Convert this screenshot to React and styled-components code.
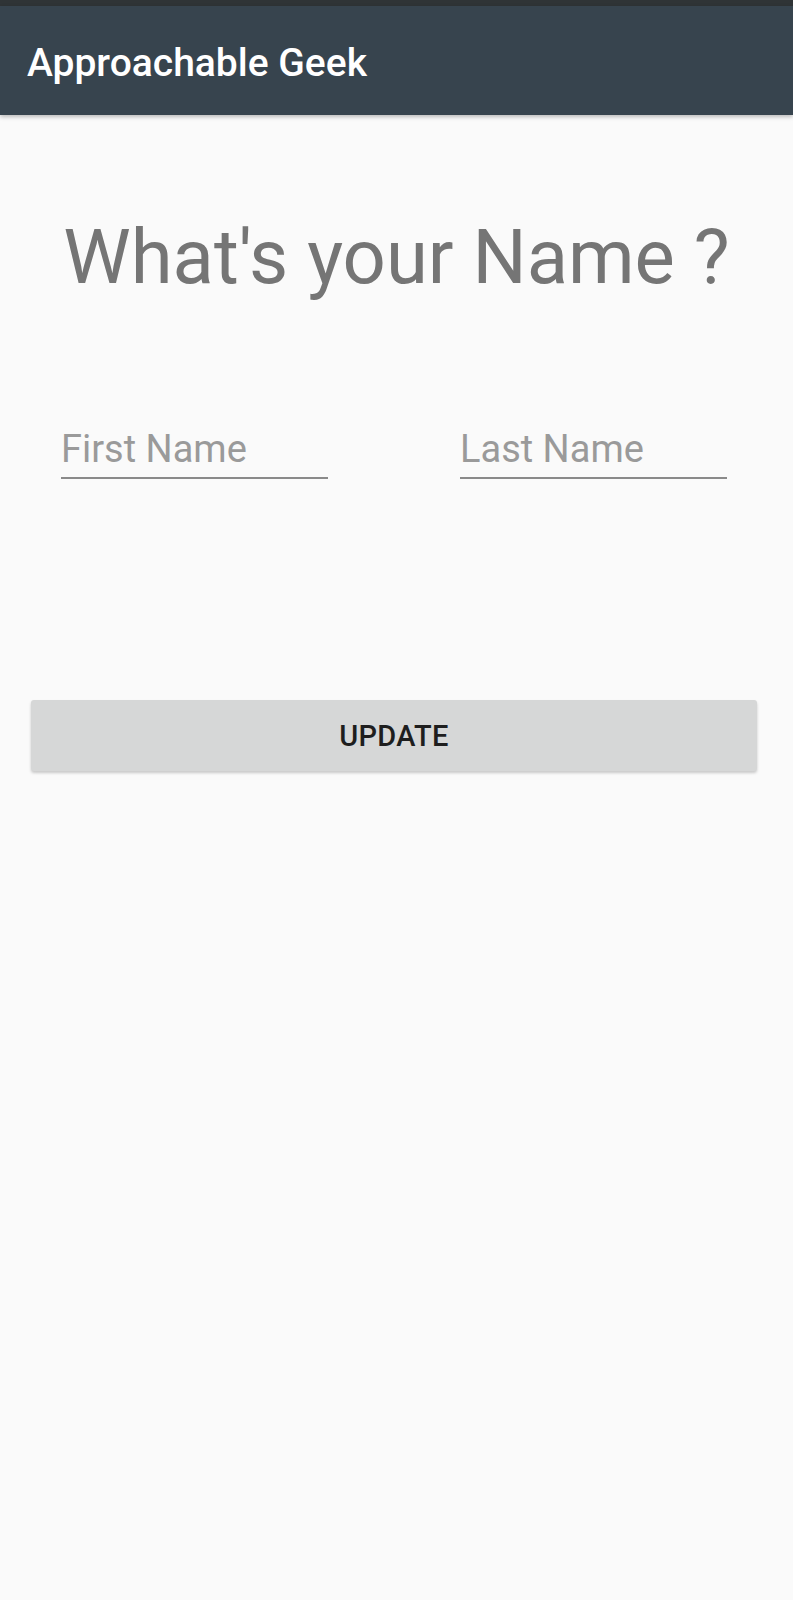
import styled, { createGlobalStyle } from 'styled-components';

const GlobalStyle = createGlobalStyle`
  html, body {
    margin: 0;
    padding: 0;
    background: #fafafa;
    font-family: Roboto, "Liberation Sans", sans-serif;
  }
`;

const Screen = styled.div`
  min-height: 1600px;
  background: #fafafa;
  display: flex;
  flex-direction: column;
`;

const StatusBar = styled.div`
  height: 6px;
  background: #2f3436;
`;

const AppBar = styled.header`
  height: 109px;
  background: #37444e;
  display: flex;
  align-items: center;
  padding-left: 27px;
  box-shadow: 0 2px 4px rgba(0, 0, 0, 0.25);
  position: relative;
  z-index: 1;
`;

const AppTitle = styled.h1`
  margin: 0;
  color: #ffffff;
  font-size: 39px;
  font-weight: 500;
  line-height: 1;
  padding-top: 5px;
`;

const Content = styled.main`
  display: flex;
  flex-direction: column;
  align-items: center;
  padding: 97px 36px 0 31px;
`;

const Heading = styled.h2`
  margin: 0;
  color: #757575;
  font-size: 76px;
  font-weight: 400;
  line-height: 1.2;
  text-align: center;
  padding-left: 5px;
`;

const FieldRow = styled.div`
  align-self: stretch;
  display: flex;
  justify-content: space-between;
  padding: 0 30px 0 30px;
  margin-top: 124px;
`;

const Field = styled.input`
  width: 267px;
  box-sizing: border-box;
  border: none;
  border-bottom: 2px solid #8a8a8a;
  background: transparent;
  font-family: Roboto, "Liberation Sans", sans-serif;
  font-size: 38px;
  color: #222;
  padding: 0 0 6px 0;
  outline: none;

  &::placeholder {
    color: #9a9a9a;
  }
`;

const Button = styled.button`
  align-self: stretch;
  margin-top: 221px;
  height: 71px;
  border: none;
  border-radius: 3px;
  background: #d6d7d7;
  color: #1e1e1e;
  font-family: Roboto, "Liberation Sans", sans-serif;
  font-size: 29px;
  font-weight: 500;
  letter-spacing: 0.3px;
  box-shadow: 0 2px 3px rgba(0, 0, 0, 0.2);
`;

const App = () => {
  return (
    <Screen>
      <GlobalStyle />
      <StatusBar />
      <AppBar>
        <AppTitle>Approachable Geek</AppTitle>
      </AppBar>
      <Content>
        <Heading>What's your Name ?</Heading>
        <FieldRow>
          <Field placeholder="First Name" />
          <Field placeholder="Last Name" />
        </FieldRow>
        <Button>UPDATE</Button>
      </Content>
    </Screen>
  );
};

export default App;
